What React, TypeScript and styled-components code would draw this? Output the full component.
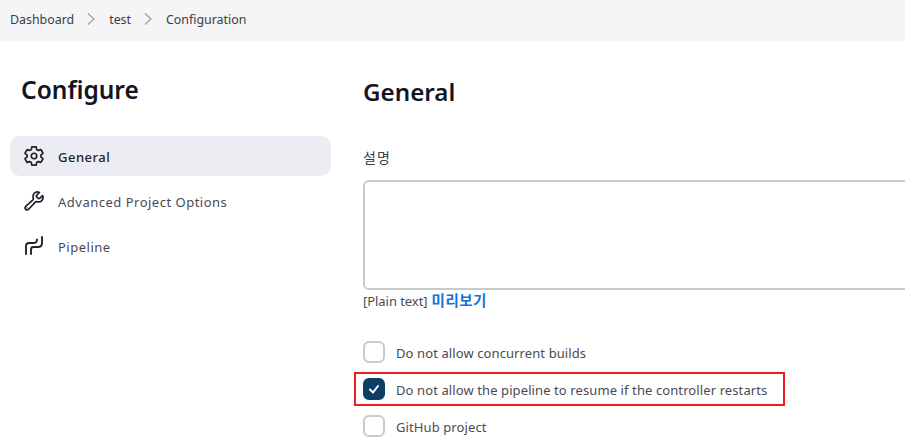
import React from 'react';
import styled, { createGlobalStyle } from 'styled-components';
import { IoSettingsOutline, IoBuildOutline } from 'react-icons/io5';

const GlobalStyle = createGlobalStyle`
  html, body {
    margin: 0;
    height: 100%;
    overflow: hidden;
    background: #fff;
  }
  body {
    font-family: "Noto Sans", "Noto Sans CJK KR", sans-serif;
    color: #14141f;
  }
`;

const Page = styled.div`
  width: 905px;
  height: 445px;
  overflow: hidden;
`;

const Breadcrumbs = styled.nav`
  height: 41px;
  padding: 0 10px 3px;
  box-sizing: border-box;
  display: flex;
  align-items: center;
  background: #f5f5f8;
  font-size: 12.4px;
  color: #3c3c46;
`;

const Chevron = styled.svg`
  width: 10px;
  height: 14px;
  margin: 0 13px 0 12px;
  fill: none;
  stroke: #9a9aa3;
  stroke-width: 1.2;
`;

const Layout = styled.div`
  display: flex;
`;

const Sidebar = styled.aside`
  width: 321px;
  margin-left: 10px;
  flex-shrink: 0;
`;

const SideTitle = styled.h1`
  margin: 32px 0 29px 11px;
  font-size: 24.5px;
  line-height: 34px;
  font-weight: 600;
`;

const SideList = styled.div`
  display: flex;
  flex-direction: column;
  gap: 5px;
`;

const SideItem = styled.a<{ $active?: boolean }>`
  height: 40px;
  padding-left: 13px;
  display: flex;
  align-items: center;
  gap: 13px;
  border-radius: 10px;
  font-size: 13px;
  font-weight: ${({ $active }) => ($active ? 500 : 400)};
  color: ${({ $active }) => ($active ? '#22222c' : '#4a4a54')};
  background: ${({ $active }) => ($active ? '#ecedf2' : 'transparent')};
  svg {
    width: 22px;
    height: 22px;
    flex-shrink: 0;
    color: #22222c;
  }
`;

const SideLabel = styled.span`
  margin-top: 2px;
  letter-spacing: 0.5px;
`;

const GearIcon = styled(IoSettingsOutline)`
  path {
    stroke-width: 40;
  }
`;

const WrenchIcon = styled(IoBuildOutline)`
  path {
    stroke-width: 40;
  }
`;

const Main = styled.main`
  margin-left: 32px;
  flex: 1;
  min-width: 0;
`;

const SectionTitle = styled.h2`
  margin: 34px 0 40px;
  font-size: 24.2px;
  line-height: 34px;
  font-weight: 600;
`;

const FieldLabel = styled.label`
  display: block;
  font-size: 14px;
  line-height: 18px;
  letter-spacing: 1px;
  margin-bottom: 13px;
  color: #3c3c46;
`;

const TextArea = styled.div`
  width: 600px;
  height: 106px;
  border: 2px solid #c3cdd0;
  border-radius: 6px;
  background: #fff;
`;

const Hint = styled.div`
  margin-top: 1px;
  display: flex;
  align-items: center;
  gap: 4px;
  height: 18px;
  font-size: 13px;
  color: #4a4a54;
`;

const HintText = styled.span`
  margin-top: 2px;
  letter-spacing: -0.05px;
`;

const PreviewLink = styled.a`
  font-size: 14.5px;
  letter-spacing: 0.5px;
  font-weight: 700;
  color: #1272d6;
  margin-top: -2px;
`;

const Options = styled.div`
  margin-top: 32px;
  display: flex;
  flex-direction: column;
  gap: 15px;
`;

const Option = styled.div`
  position: relative;
  height: 22px;
  display: flex;
  align-items: center;
  gap: 11px;
  font-size: 13px;
  letter-spacing: 0.1px;
  color: #4a4a54;
`;

const OptionLabel = styled.span`
  margin-top: 1px;
`;

const Box = styled.span<{ $checked?: boolean }>`
  width: 22px;
  height: 22px;
  box-sizing: border-box;
  border-radius: 6px;
  display: flex;
  align-items: center;
  justify-content: center;
  border: 2px solid ${({ $checked }) => ($checked ? '#0b3f63' : '#c3cdd0')};
  background: ${({ $checked }) => ($checked ? '#0b3f63' : '#fff')};
  svg {
    width: 12px;
    height: 12px;
    fill: none;
    stroke: #fff;
    stroke-width: 2;
    stroke-linecap: round;
    stroke-linejoin: round;
  }
`;

const Highlight = styled.span`
  position: absolute;
  left: -9px;
  top: -6px;
  width: 431px;
  height: 34px;
  box-sizing: border-box;
  border: 2px solid #ed1c24;
  pointer-events: none;
`;

const PipelineIcon = () => (
  <svg viewBox="0 0 22 22" fill="none" stroke="currentColor" strokeWidth="1.9" strokeLinecap="round">
    <path d="M3 19V11C3 9 4 8 6 8H10.5C12.8 8 14 6.8 14 4.5" />
    <path d="M8 19V14.5C8 13 9 12 10.5 12H15C17.5 12 19 10.5 19 8V2" />
  </svg>
);

const Separator = () => (
  <Chevron viewBox="0 0 10 14">
    <path d="M2 1.5L8 7L2 12.5" />
  </Chevron>
);

const Check = ({ label, checked, marked }: { label: string; checked?: boolean; marked?: boolean }) => (
  <Option>
    {marked && <Highlight />}
    <Box $checked={checked}>
      {checked && (
        <svg viewBox="0 0 12 12">
          <path d="M2 6.5L5 9.5L10 3" />
        </svg>
      )}
    </Box>
    <OptionLabel>{label}</OptionLabel>
  </Option>
);

const App = () => (
  <Page>
    <GlobalStyle />
    <Breadcrumbs>
      Dashboard
      <Separator />
      test
      <Separator />
      Configuration
    </Breadcrumbs>
    <Layout>
      <Sidebar>
        <SideTitle>Configure</SideTitle>
        <SideList>
          <SideItem $active>
            <GearIcon />
            <SideLabel>General</SideLabel>
          </SideItem>
          <SideItem>
            <WrenchIcon />
            <SideLabel>Advanced Project Options</SideLabel>
          </SideItem>
          <SideItem>
            <PipelineIcon />
            <SideLabel>Pipeline</SideLabel>
          </SideItem>
        </SideList>
      </Sidebar>
      <Main>
        <SectionTitle>General</SectionTitle>
        <FieldLabel>설명</FieldLabel>
        <TextArea />
        <Hint>
          <HintText>[Plain text]</HintText>
          <PreviewLink>미리보기</PreviewLink>
        </Hint>
        <Options>
          <Check label="Do not allow concurrent builds" />
          <Check label="Do not allow the pipeline to resume if the controller restarts" checked marked />
          <Check label="GitHub project" />
        </Options>
      </Main>
    </Layout>
  </Page>
);

export default App;
